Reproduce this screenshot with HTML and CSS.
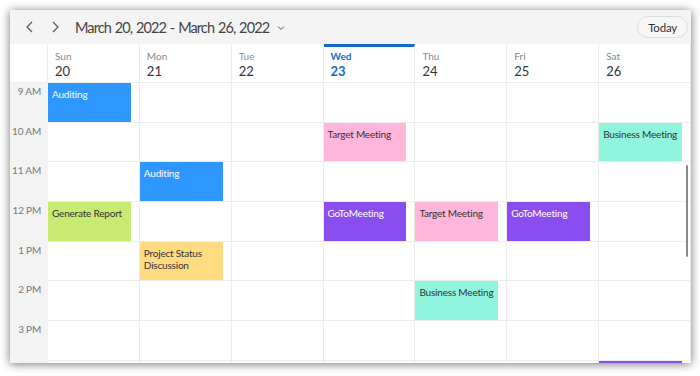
FILE: index.html
```html
<!DOCTYPE html>
<html lang="en">
<head>
    <meta charset="UTF-8">
    <title>Scheduler - Week</title>
    <link rel="stylesheet" href="styles.css">
</head>
<body>

<div class="window">
    <div class="toolbar">
        <span class="nav">
            <svg width="10" height="12" viewBox="0 0 10 12"><path d="M7 1 L2 6 L7 11" fill="none" stroke="#555" stroke-width="1.2"/></svg>
        </span>
        <span class="nav">
            <svg width="10" height="12" viewBox="0 0 10 12"><path d="M3 1 L8 6 L3 11" fill="none" stroke="#555" stroke-width="1.2"/></svg>
        </span>
        <span class="title">March 20, 2022 - March 26, 2022</span>
        <svg class="caret" width="8" height="6" viewBox="0 0 8 6"><path d="M1 1.5 L4 4.5 L7 1.5" fill="none" stroke="#555" stroke-width="1"/></svg>
        <button class="today">Today</button>
    </div>

    <div class="days">
        <div class="corner"></div>
        <div class="day"><span class="dname">Sun</span><span class="dnum">20</span></div>
        <div class="day"><span class="dname">Mon</span><span class="dnum">21</span></div>
        <div class="day"><span class="dname">Tue</span><span class="dnum">22</span></div>
        <div class="day today-col"><span class="dname">Wed</span><span class="dnum">23</span></div>
        <div class="day"><span class="dname">Thu</span><span class="dnum">24</span></div>
        <div class="day"><span class="dname">Fri</span><span class="dnum">25</span></div>
        <div class="day"><span class="dname">Sat</span><span class="dnum">26</span></div>
    </div>

    <div class="grid">
        <div class="row">
            <div class="time">9 AM</div>
            <div class="cell"><div class="event blue">Auditing</div></div>
            <div class="cell"></div><div class="cell"></div><div class="cell"></div>
            <div class="cell"></div><div class="cell"></div><div class="cell"></div>
        </div>
        <div class="row">
            <div class="time">10 AM</div>
            <div class="cell"></div><div class="cell"></div><div class="cell"></div>
            <div class="cell"><div class="event pink">Target Meeting</div></div>
            <div class="cell"></div><div class="cell"></div>
            <div class="cell"><div class="event teal">Business Meeting</div></div>
        </div>
        <div class="row">
            <div class="time">11 AM</div>
            <div class="cell"></div>
            <div class="cell"><div class="event blue">Auditing</div></div>
            <div class="cell"></div><div class="cell"></div><div class="cell"></div>
            <div class="cell"></div><div class="cell"></div>
        </div>
        <div class="row">
            <div class="time">12 PM</div>
            <div class="cell"><div class="event green">Generate Report</div></div>
            <div class="cell"></div><div class="cell"></div>
            <div class="cell"><div class="event purple">GoToMeeting</div></div>
            <div class="cell"><div class="event pink">Target Meeting</div></div>
            <div class="cell"><div class="event purple">GoToMeeting</div></div>
            <div class="cell"></div>
        </div>
        <div class="row">
            <div class="time">1 PM</div>
            <div class="cell"></div>
            <div class="cell"><div class="event yellow">Project Status Discussion</div></div>
            <div class="cell"></div><div class="cell"></div><div class="cell"></div>
            <div class="cell"></div><div class="cell"></div>
        </div>
        <div class="row">
            <div class="time">2 PM</div>
            <div class="cell"></div><div class="cell"></div><div class="cell"></div><div class="cell"></div>
            <div class="cell"><div class="event teal">Business Meeting</div></div>
            <div class="cell"></div><div class="cell"></div>
        </div>
        <div class="row">
            <div class="time">3 PM</div>
            <div class="cell"></div><div class="cell"></div><div class="cell"></div><div class="cell"></div>
            <div class="cell"></div><div class="cell"></div><div class="cell"></div>
        </div>
        <div class="row">
            <div class="time">4 PM</div>
            <div class="cell"></div><div class="cell"></div><div class="cell"></div><div class="cell"></div>
            <div class="cell"></div><div class="cell"></div>
            <div class="cell"><div class="event purple">GoToMeeting</div></div>
        </div>
        <div class="scrollbar"></div>
    </div>
</div>

</body>
</html>
```

FILE: styles.css
```css
body {
    margin: 0;
    background-color: #fff;
    font-family: 'Lato', 'Noto Sans', sans-serif;
    color: #333;
}

.window {
    margin: 10px;
    width: 681px;
    height: 353px;
    background-color: #fff;
    box-shadow: 0 1px 9px rgba(0, 0, 0, 0.55);
    display: flex;
    flex-direction: column;
    overflow: hidden;
}

/* Toolbar */
.toolbar {
    height: 34px;
    flex-shrink: 0;
    background-color: #f4f4f4;
    display: flex;
    align-items: center;
    padding: 0 3px 0 7px;
}

.nav {
    width: 25px;
    display: flex;
    justify-content: center;
}

.title {
    margin-left: 8px;
    font-size: 14.5px;
    letter-spacing: -0.9px;
    word-spacing: 1px;
    color: #444;
}

.caret {
    margin-left: 8px;
    margin-top: 2px;
}

.today {
    margin-left: auto;
    height: 22px;
    padding: 0 10px;
    border: 1px solid #ddd;
    border-radius: 11px;
    background-color: #f7f7f7;
    font-family: inherit;
    font-size: 11.5px;
    letter-spacing: -0.2px;
    color: #333;
}

/* Day header */
.days {
    height: 39px;
    flex-shrink: 0;
    display: grid;
    grid-template-columns: 38px repeat(7, 1fr);
    border-bottom: 1px solid #ececec;
    box-sizing: border-box;
}

.corner {
    border-right: 1px solid #ececec;
}

.day {
    border-right: 1px solid #ececec;
    display: flex;
    flex-direction: column;
    padding: 5px 0 0 7px;
}

.dname {
    font-size: 10px;
    color: #888;
    line-height: 14px;
}

.dnum {
    font-size: 13px;
    color: #333;
    line-height: 17px;
}

.today-col {
    border-top: 3px solid #0f6cc9;
    padding-top: 2px;
}

.today-col .dname,
.today-col .dnum {
    color: #0f6cc9;
    font-weight: 700;
}

/* Time grid */
.grid {
    flex: 1;
    position: relative;
    overflow: hidden;
}

.row {
    height: 39.7px;
    display: grid;
    grid-template-columns: 38px repeat(7, 1fr);
}

.time {
    background-color: #f3f3f3;
    font-size: 10px;
    letter-spacing: -0.2px;
    white-space: nowrap;
    color: #777;
    text-align: right;
    padding: 2px 7px 0 0;
}

.cell {
    border-right: 1px solid #ececec;
    border-bottom: 1px solid #ececec;
    padding-right: 8px;
    min-width: 0;
}

.event {
    height: 100%;
    box-sizing: border-box;
    padding: 5px 4px;
    font-size: 10px;
    letter-spacing: -0.2px;
    line-height: 12px;
    color: #333;
}

.blue { background-color: #2d96ff; color: #fff; }
.pink { background-color: #ffb6da; }
.teal { background-color: #8ff5dc; }
.green { background-color: #c7ea70; }
.yellow { background-color: #ffdc82; }
.purple { background-color: #8a4ef0; color: #fff; }

.scrollbar {
    position: absolute;
    right: 3px;
    top: 82px;
    width: 2px;
    height: 92px;
    background-color: #8a8a8a;
    border-radius: 1px;
}
```
